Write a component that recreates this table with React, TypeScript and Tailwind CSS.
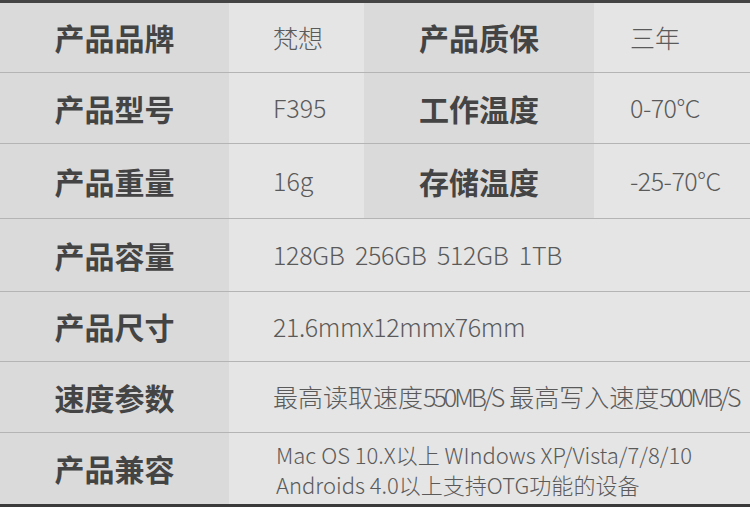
export default function App() {
  const label = "flex items-center justify-center bg-[#dadada] text-[30px] font-bold text-[#444]"
  const value = "flex items-center bg-[#e5e5e5] text-[25px] font-light text-[#5a5a5a]"

  return (
    <div
      className="w-[750px] h-[507px] flex flex-col bg-[#e5e5e5] overflow-hidden"
      style={{ fontFamily: '"Noto Sans CJK SC", "Noto Sans", sans-serif' }}
    >
      <div className="h-[3px] bg-[#444]" />

      {/* 上面三行：两组 标签/值 */}
      <div className="grid grid-cols-[229px_135px_230px_156px] h-[70px] border-b border-[#b4b4b4]">
        <div className={label}>产品品牌</div>
        <div className={value + " pl-[44px]"}>梵想</div>
        <div className={label}>产品质保</div>
        <div className={value + " pl-[36px]"}>三年</div>
      </div>
      <div className="grid grid-cols-[229px_135px_230px_156px] h-[71px] border-b border-[#b4b4b4]">
        <div className={label}>产品型号</div>
        <div className={value + " pl-[44px]"}>F395</div>
        <div className={label}>工作温度</div>
        <div className={value + " pl-[36px] tracking-[-0.5px]"}>0-70°C</div>
      </div>
      <div className="grid grid-cols-[229px_135px_230px_156px] h-[75px] border-b border-[#b4b4b4]">
        <div className={label}>产品重量</div>
        <div className={value + " pl-[44px]"}>16g</div>
        <div className={label}>存储温度</div>
        <div className={value + " pl-[36px] tracking-[-0.5px]"}>-25-70°C</div>
      </div>

      {/* 下面四行：整行值 */}
      <div className="grid grid-cols-[229px_1fr] h-[73px] border-b border-[#b4b4b4]">
        <div className={label}>产品容量</div>
        <div className={value + " pl-[44px] whitespace-pre tracking-[-0.3px]"}>128GB  256GB  512GB  1TB</div>
      </div>
      <div className="grid grid-cols-[229px_1fr] h-[70px] border-b border-[#b4b4b4]">
        <div className={label}>产品尺寸</div>
        <div className={value + " pl-[44px] tracking-[-0.4px]"}>21.6mmx12mmx76mm</div>
      </div>
      <div className="grid grid-cols-[229px_1fr] h-[71px] border-b border-[#b4b4b4]">
        <div className={label}>速度参数</div>
        <div className={value + " pl-[44px] whitespace-nowrap text-[24px]"}>
          最高读取速度<span className="tracking-[-3px]">550MB/S</span>
          <span className="ml-[7px]">最高写入速度</span>
          <span className="tracking-[-3px]">500MB/S</span>
        </div>
      </div>
      <div className="grid grid-cols-[229px_1fr] h-[71px]">
        <div className={label}>产品兼容</div>
        <div className="flex flex-col justify-center bg-[#e5e5e5] pl-[47px] text-[22px] leading-[30px] font-light text-[#5a5a5a]">
          <span>Mac OS 10.X以上 WIndows XP/Vista/7/8/10</span>
          <span>Androids 4.0以上支持OTG功能的设备</span>
        </div>
      </div>

      <div className="flex-1 bg-[#3a3a3a]" />
    </div>
  )
}
